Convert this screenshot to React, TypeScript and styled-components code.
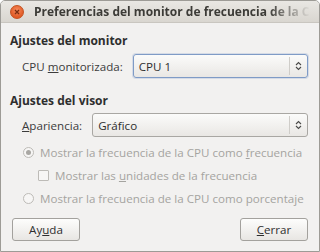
import React from 'react'
import styled, { createGlobalStyle } from 'styled-components'

const GlobalStyle = createGlobalStyle`
  html, body {
    margin: 0;
    padding: 0;
    background: #ffffff;
  }
  * {
    box-sizing: border-box;
  }
`

const Window = styled('div')`
  width: 320px;
  height: 252px;
  display: flex;
  flex-direction: column;
  border: 1px solid #9d9b96;
  border-radius: 5px 5px 0 0;
  background-color: #f2f1f0;
  font-family: 'Open Sans', 'Noto Sans', sans-serif;
  font-size: 11.6px;
  color: #3c3c3c;
  overflow: hidden;
`

const TitleBar = styled('div')`
  height: 22px;
  flex: none;
  display: flex;
  align-items: center;
  padding-left: 9px;
  gap: 10px;
  background: linear-gradient(#e9e7e3, #d9d6d0);
  border-bottom: 1px solid #c9c6c0;
`

const CloseButton = styled('div')`
  width: 14px;
  height: 14px;
  flex: none;
  border-radius: 50%;
  background: radial-gradient(circle at 50% 35%, #f78a5c, #e05a25 70%);
  border: 1px solid #c4511f;
  display: flex;
  align-items: center;
  justify-content: center;
`

const Title = styled('div')`
  flex: 1;
  min-width: 0;
  overflow: hidden;
  white-space: nowrap;
  font-weight: 700;
  font-size: 12px;
  color: #3c3b37;
  -webkit-mask-image: linear-gradient(to right, #000 82%, transparent 97%);
  mask-image: linear-gradient(to right, #000 82%, transparent 97%);
`

const Body = styled('div')`
  flex: 1;
  display: flex;
  flex-direction: column;
  padding: 10px 11px 0 9px;
`

const Heading = styled('div')<{ $top?: number }>`
  height: 16px;
  line-height: 16px;
  font-weight: 700;
  font-size: 12px;
  color: #2e2e2e;
  margin-top: ${({ $top }) => $top ?? 0}px;
`

const FieldRow = styled('div')<{ $top: number }>`
  display: flex;
  align-items: center;
  gap: 10px;
  height: 24px;
  margin-top: ${({ $top }) => $top}px;
  padding-left: 12px;
`

const Label = styled('span')`
  white-space: nowrap;
`

const Combo = styled('div')<{ $focused?: boolean }>`
  flex: 1;
  height: 24px;
  display: flex;
  align-items: center;
  border: 1px solid ${({ $focused }) => ($focused ? '#7f9bc6' : '#a9a7a3')};
  border-radius: 3px;
  background: linear-gradient(#fbfbfa, #e9e7e4);
  box-shadow: ${({ $focused }) => ($focused ? '0 0 0 1px rgba(127,155,198,0.25)' : 'none')};
  color: #2e2e2e;
`

const ComboText = styled('span')`
  flex: 1;
  padding-left: 5px;
`

const ComboArrows = styled('span')`
  width: 18px;
  height: 18px;
  flex: none;
  border-left: 1px solid #cfcdc9;
  display: flex;
  align-items: center;
  justify-content: center;
`

const OptionRow = styled('div')<{ $indent: number; $height: number }>`
  display: flex;
  align-items: center;
  gap: 6px;
  height: ${({ $height }) => $height}px;
  padding-left: ${({ $indent }) => $indent}px;
  color: #a5a4a0;
  white-space: nowrap;
`

const Radio = styled('span')<{ $checked?: boolean }>`
  width: 11px;
  height: 11px;
  flex: none;
  border-radius: 50%;
  border: 1px solid #bdbbb7;
  background: #f7f6f5;
  display: flex;
  align-items: center;
  justify-content: center;

  &::after {
    content: '';
    width: 5px;
    height: 5px;
    border-radius: 50%;
    background: ${({ $checked }) => ($checked ? '#a9a7a3' : 'transparent')};
  }
`

const Check = styled('span')`
  width: 11px;
  height: 11px;
  flex: none;
  border: 1px solid #bdbbb7;
  border-radius: 1px;
  background: #f7f6f5;
`

const ButtonBar = styled('div')`
  display: flex;
  justify-content: space-between;
  margin-top: 7px;
  padding-left: 2px;
`

const Button = styled('button')`
  width: 68px;
  height: 23px;
  padding: 0;
  border: 1px solid #a3a19d;
  border-radius: 3px;
  background: linear-gradient(#fdfdfc, #e8e6e3);
  font-family: inherit;
  font-size: 11.6px;
  color: #2e2e2e;
`

function Arrows() {
  return (
    <svg width="7" height="10" viewBox="0 0 7 10">
      <path d="M1 4 L3.5 1.5 L6 4 M1 6 L3.5 8.5 L6 6" fill="none" stroke="#4a4a48" strokeWidth="1.1" />
    </svg>
  )
}

function App() {
  return (
    <>
      <GlobalStyle />
      <Window>
        <TitleBar>
          <CloseButton>
            <svg width="6" height="6" viewBox="0 0 6 6">
              <path d="M1 1 L5 5 M5 1 L1 5" stroke="#7a2d10" strokeWidth="1.3" />
            </svg>
          </CloseButton>
          <Title>Preferencias del monitor de frecuencia de la CPU</Title>
        </TitleBar>

        <Body>
          <Heading>Ajustes del monitor</Heading>
          <FieldRow $top={5}>
            <Label>
              CPU <u>m</u>onitorizada:
            </Label>
            <Combo $focused>
              <ComboText>CPU 1</ComboText>
              <ComboArrows>
                <Arrows />
              </ComboArrows>
            </Combo>
          </FieldRow>

          <Heading $top={15}>Ajustes del visor</Heading>
          <FieldRow $top={4}>
            <Label>
              <u>A</u>pariencia:
            </Label>
            <Combo>
              <ComboText>Gráfico</ComboText>
              <ComboArrows>
                <Arrows />
              </ComboArrows>
            </Combo>
          </FieldRow>

          <OptionRow $indent={13} $height={26} style={{ marginTop: 2 }}>
            <Radio $checked />
            <span>
              Mostrar la frecuencia de la CPU como <u>f</u>recuencia
            </span>
          </OptionRow>
          <OptionRow $indent={28} $height={20}>
            <Check />
            <span>
              Mostrar las <u>u</u>nidades de la frecuencia
            </span>
          </OptionRow>
          <OptionRow $indent={13} $height={26}>
            <Radio />
            <span>Mostrar la frecuencia de la CPU como porcentaje</span>
          </OptionRow>

          <ButtonBar>
            <Button>
              Ay<u>u</u>da
            </Button>
            <Button>
              <u>C</u>errar
            </Button>
          </ButtonBar>
        </Body>
      </Window>
    </>
  )
}

export default App
